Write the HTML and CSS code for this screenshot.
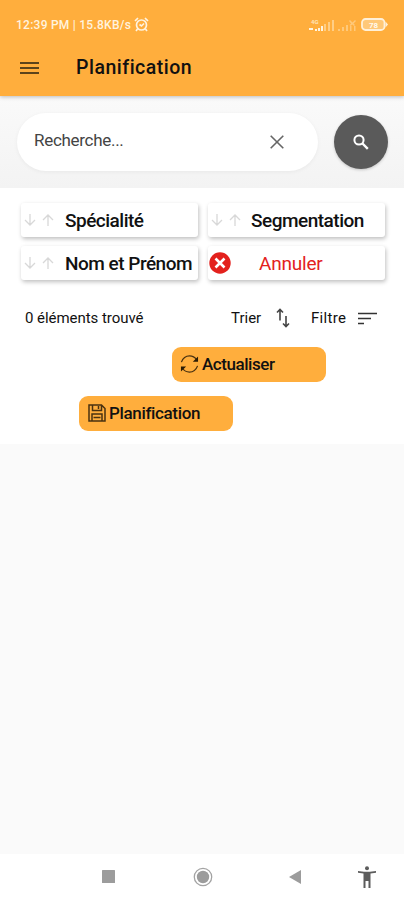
FILE: index.html
```html
<!DOCTYPE html>
<html lang="fr">
<head>
    <meta charset="UTF-8">
    <meta name="viewport" content="width=device-width, initial-scale=1.0">
    <title>Planification</title>
    <link rel="stylesheet" href="styles.css">
</head>
<body>

<header class="app-header">
    <div class="status-bar">
        <span class="status-text">12:39 PM | 15.8KB/s</span>
        <svg class="alarm" width="15" height="15" viewBox="0 0 15 15" fill="none" stroke="#fff3df" stroke-width="1.7">
            <circle cx="7.5" cy="8" r="5"/>
            <path d="M1 4l3-3M14 4l-3-3M3.5 12l-1.5 2M11.5 12l1.5 2M5.5 7.5l2 1.5 2.5-2.5"/>
        </svg>
        <svg class="signal" width="48" height="16" viewBox="0 0 48 16" fill="#ffe3b8">
            <text class="net" x="2" y="7">4G</text>
            <path fill="#fff3df" d="M0 11h4v2H0zM6 12h2v2H6zM9 11h2v3H9zM12 9h2v5h-2z"/>
            <path opacity=".6" d="M15 7h2v7h-2zM19 5h2v9h-2zM23 3h2v11h-2z"/>
            <path opacity=".5" d="M29 12h2v2h-2zM33 10h2v4h-2zM37 8h2v6h-2zM41 9h1.500v5h-1.500zM45 9h1.500v5h-1.500zM40 4l1-1 2.500 2.500L46 3l1 1-2.500 2.500L46 8l-1 1-1.500-1.500L41.500 9l-1-1L42 6.500z"/>
        </svg>
        <svg class="battery" width="28" height="14" viewBox="0 0 28 14">
            <rect x="1" y="1" width="22.500" height="11" rx="3.500" fill="#ffc878" stroke="#fff0d8" stroke-width="1.800"/>
            <path d="M24.500 3.500l2.500 3-2.500 3z" fill="#fff0d8"/>
            <text class="level" x="12.500" y="9.500">78</text>
        </svg>
    </div>
    <div class="title-bar">
        <svg class="menu" width="20" height="14" viewBox="0 0 20 14" stroke="#5c431b" stroke-width="2">
            <path d="M0 2h19M0 7h19M0 12h19"/>
        </svg>
        <h1>Planification</h1>
    </div>
</header>

<section class="search">
    <div class="search-box">
        <span class="placeholder">Recherche...</span>
        <svg width="14" height="14" viewBox="0 0 14 14" stroke="#666" stroke-width="1.600">
            <path d="M.7.700l12.600 12.600M13.300.700L.7 13.300"/>
        </svg>
    </div>
    <div class="search-btn">
        <svg width="16" height="16" viewBox="0 0 16 16" fill="none" stroke="#fff">
            <circle cx="6" cy="6" r="4.600" stroke-width="2"/>
            <path d="M9.500 9.500l5.300 5.300" stroke-width="2.400"/>
        </svg>
    </div>
</section>

<main class="panel">
    <div class="sorts">
        <div class="card">
            <svg class="arrows" width="30" height="12" viewBox="0 0 30 12" fill="none" stroke="#d8d8d8" stroke-width="1.300">
                <path d="M6 0v11M1 6l5 5 5-5M24 12V1M19 6l5-5 5 5"/>
            </svg>
            <span class="specialite">Spécialité</span>
        </div>
        <div class="card">
            <svg class="arrows" width="30" height="12" viewBox="0 0 30 12" fill="none" stroke="#d8d8d8" stroke-width="1.300">
                <path d="M6 0v11M1 6l5 5 5-5M24 12V1M19 6l5-5 5 5"/>
            </svg>
            <span class="segmentation">Segmentation</span>
        </div>
        <div class="card">
            <svg class="arrows" width="30" height="12" viewBox="0 0 30 12" fill="none" stroke="#d8d8d8" stroke-width="1.300">
                <path d="M6 0v11M1 6l5 5 5-5M24 12V1M19 6l5-5 5 5"/>
            </svg>
            <span class="nom">Nom et Prénom</span>
        </div>
        <div class="card cancel">
            <svg width="22" height="22" viewBox="0 0 22 22">
                <circle cx="11" cy="11" r="10.700" fill="#e3211d"/>
                <path d="M6.500 6.500l9 9M15.500 6.500l-9 9" stroke="#fff" stroke-width="2.600"/>
            </svg>
            <span class="annuler">Annuler</span>
        </div>
    </div>

    <div class="results">
        <span class="count">0 éléments trouvé</span>
        <span class="trier">Trier</span>
        <svg class="swap" width="14" height="20" viewBox="0 0 14 20" fill="none" stroke="#444" stroke-width="1.600">
            <path d="M4 12.500V2M1 4.500L4 1.500l3 3M10 8v10M7 15.500l3 3 3-3"/>
        </svg>
        <span class="filtre">Filtre</span>
        <svg class="filter" width="19" height="13" viewBox="0 0 19 13" stroke="#333" stroke-width="1.600">
            <path d="M0 1.500h19M0 6.500h13M0 11.500h6"/>
        </svg>
    </div>

    <div class="actions">
        <div class="btn refresh">
            <svg width="19" height="20" viewBox="0 0 20 20" fill="none" stroke="#4a3210" stroke-width="1.300">
                <path d="M1.500 8C3 4 6 1.500 10 1.500c3.300 0 5.800 1.500 7.500 4M18.500 12C17 16 14 18.500 10 18.500c-3.300 0-5.800-1.500-7.500-4"/>
                <path d="M19 2v5.500h-5.500zM1 18v-5.500h5.500z" fill="#2b1c05" stroke="none"/>
            </svg>
            <span class="actualiser">Actualiser</span>
        </div>
        <div class="btn save">
            <svg width="18" height="18" viewBox="0 0 18 18" fill="none" stroke="#4a3210" stroke-width="1.500">
                <path d="M1 1h12.500L17 4.500V17H1zM4.500 1v5.500h9V1M10.500 2v3M4 17v-7h10v7M5.500 13.500h7"/>
            </svg>
            <span class="planif">Planification</span>
        </div>
    </div>
</main>

<nav class="nav-bar">
    <svg class="recent" width="13" height="13" viewBox="0 0 13 13"><rect width="13" height="13" rx=".5" fill="#9c9c9c"/></svg>
    <svg class="home" width="20" height="20" viewBox="0 0 20 20">
        <circle cx="10" cy="10" r="8.700" fill="none" stroke="#a3a3a3" stroke-width="1.300"/>
        <circle cx="10" cy="10" r="6.200" fill="#9c9c9c"/>
    </svg>
    <svg class="back" width="12" height="14" viewBox="0 0 12 14"><path d="M12 0v14L0 7z" fill="#9c9c9c"/></svg>
    <svg class="access" width="18" height="22" viewBox="0 0 18 22" fill="#5c5c5c">
        <circle cx="9" cy="2.300" r="2"/>
        <path d="M0 5l6 .8h6l6-.8v1.800l-5.500.8V22h-2v-7h-3v7h-2V7.600L0 6.800z"/>
    </svg>
</nav>

</body>
</html>
```

FILE: styles.css
```css
:root {
    --orange: #ffae3d;
}
* { box-sizing: border-box; }
body {
    margin: 0;
    height: 900px;
    display: flex;
    flex-direction: column;
    overflow: hidden;
    background-color: #fafafa;
    color: #111;
    font-family: Roboto, "Liberation Sans", sans-serif;
}
svg { display: block; flex: none; }
span, h1 { white-space: nowrap; }

.app-header {
    height: 96px;
    background-color: var(--orange);
    box-shadow: 0 1px 4px rgba(0, 0, 0, 0.25);
    z-index: 1;
}
.status-bar {
    display: flex;
    align-items: center;
    height: 48px;
    padding: 1px 0 0 16px;
}
.status-text { width: 116px; font-size: 12px; font-weight: 500; letter-spacing: 0.25px; color: #fff3df; }
.alarm { margin-left: 2px; }
.signal { margin-left: 160px; }
.battery { margin-left: 4px; }
.net { font-size: 6px; font-weight: bold; }
.level { font-size: 8px; font-weight: bold; fill: #fffaf0; text-anchor: middle; }

.title-bar { display: flex; align-items: center; height: 40px; padding-left: 20px; }
h1 { margin: 0 0 1px 36px; font-size: 19.5px; font-weight: 500; letter-spacing: 0.5px; }

.search {
    display: flex;
    align-items: center;
    gap: 16px;
    height: 92px;
    padding: 0 16px 1px 17px;
    background: linear-gradient(#fafafa, #f3f3f3);
}
.search-box {
    display: flex;
    align-items: center;
    justify-content: space-between;
    width: 301px;
    height: 58px;
    padding: 0 34px 0 17px;
    border-radius: 29px;
    background-color: #fff;
    box-shadow: 0 1px 4px rgba(0, 0, 0, 0.05);
}
.placeholder { font-size: 17px; letter-spacing: -0.3px; color: #444; margin-bottom: 4px; }
.search-btn {
    display: flex;
    align-items: center;
    justify-content: center;
    width: 54px;
    height: 54px;
    border-radius: 50%;
    background-color: #5a5a5a;
    box-shadow: 0 1px 3px rgba(0, 0, 0, 0.2);
}

.panel { height: 256px; padding: 15px 19px 0 21px; background-color: #fff; }
.sorts {
    display: grid;
    grid-template-columns: 177px 177px;
    grid-auto-rows: 34px;
    gap: 9px 10px;
}
.card {
    display: flex;
    align-items: center;
    padding-left: 3px;
    border-radius: 3px;
    background-color: #fff;
    box-shadow: 1px 2px 4px rgba(0, 0, 0, 0.25);
    font-size: 19px;
    font-weight: 500;
    letter-spacing: -0.5px;
}
.card span { margin-left: 11px; }
.card .segmentation { margin-left: 10px; }
.cancel { padding-left: 1px; color: #e3211d; letter-spacing: -0.2px; }
.cancel .annuler { margin-left: 28px; font-weight: 400; }

.results { display: flex; align-items: center; height: 20px; margin-top: 28px; padding-left: 4px; font-size: 15px; }
.count { width: 206px; letter-spacing: -0.05px; }
.trier { width: 45px; }
.filtre { width: 47px; margin-left: 21px; letter-spacing: 0.3px; }

.actions { display: flex; flex-direction: column; gap: 14px; margin-top: 19px; }
.btn {
    display: flex;
    align-items: center;
    width: 154px;
    height: 35px;
    padding: 0 0 1px 8px;
    border-radius: 9px;
    background-color: var(--orange);
    font-size: 17px;
    font-weight: 500;
    letter-spacing: -0.45px;
}
.refresh { margin-left: 151px; }
.save { margin-left: 58px; padding-left: 9px; letter-spacing: -0.35px; }
.btn span { margin-left: 3px; }

.nav-bar {
    display: flex;
    align-items: center;
    height: 46px;
    margin-top: auto;
    padding: 0 0 1px 102px;
    background-color: #fff;
}
.home { margin-left: 78px; }
.back { margin-left: 76px; }
.access { margin-left: 57px; }
```
